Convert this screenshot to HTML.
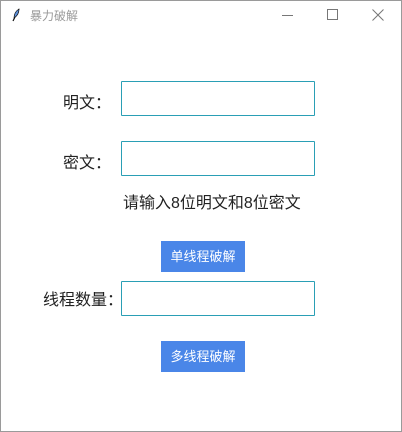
<!DOCTYPE html>
<html><head><meta charset="utf-8"><style>
*{margin:0;padding:0;box-sizing:border-box}
body{width:402px;height:432px;overflow:hidden;background:#fff;font-family:"Liberation Sans","Noto Sans CJK SC",sans-serif;position:relative}
.win{position:absolute;left:0;top:0;width:402px;height:432px;border:1px solid #9a9a9a}
.t{position:absolute;white-space:nowrap}
.inp{position:absolute;left:121px;width:194px;height:35px;border:1px solid #2a9fb5;border-radius:1px}
.btn{position:absolute;left:161px;width:84px;height:31px;background:#4a86e8;color:#fff;font-size:13px;line-height:31px;text-align:center}
.lab{font-size:16px;color:#222}
</style></head><body><div class="win"></div>
<svg class="t" style="left:11px;top:8px" width="10" height="14" viewBox="0 0 10 14"><path d="M2 13 L8 1" stroke="#111" stroke-width="1.2"/><path d="M3 10 Q3 4 8 1 Q8 7 3 10Z" fill="#5b8fd9" stroke="#111" stroke-width="0.7"/></svg>
<div class="t" style="left:30px;top:7px;font-size:12px;color:#999">暴力破解</div>
<div class="t" style="left:282px;top:15px;width:11px;height:1px;background:#777"></div>
<div class="t" style="left:327px;top:9px;width:11px;height:11px;border:1px solid #777"></div>
<svg class="t" style="left:372px;top:9px" width="12" height="12"><path d="M0.5 0.5L11.5 11.5M11.5 0.5L0.5 11.5" stroke="#777" stroke-width="1"/></svg>
<div class="t lab" style="left:63px;top:89px">明文：</div>
<div class="inp" style="top:81px"></div>
<div class="t lab" style="left:63px;top:149px">密文：</div>
<div class="inp" style="top:141px"></div>
<div class="t lab" style="left:123px;top:189px">请输入8位明文和8位密文</div>
<div class="btn" style="top:241px">单线程破解</div>
<div class="t lab" style="left:43px;top:286px">线程数量：</div>
<div class="inp" style="top:281px"></div>
<div class="btn" style="top:341px">多线程破解</div>
</body></html>
